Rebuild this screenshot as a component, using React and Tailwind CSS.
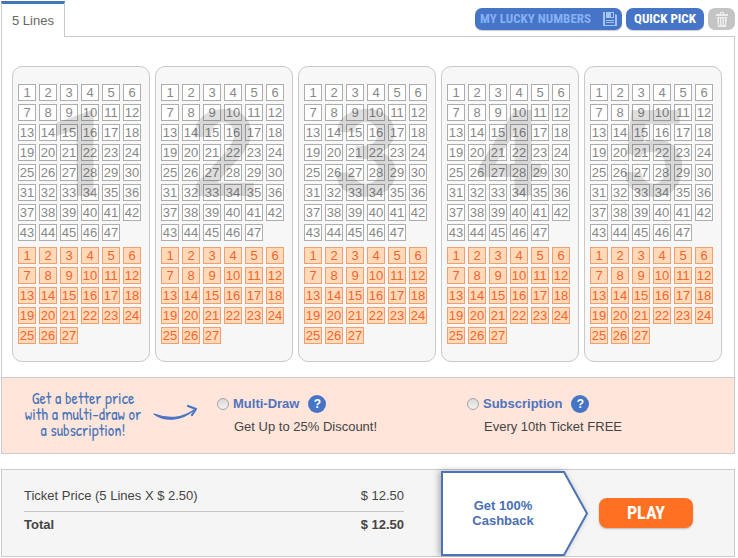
import { useState } from "react";

const LINES = [1, 2, 3, 4, 5];
const MAIN_COUNT = 47;
const BONUS_COUNT = 27;

const range = (n) => Array.from({ length: n }, (_, i) => i + 1);

export default function App() {
  const [picks, setPicks] = useState({});
  const [plan, setPlan] = useState("");

  function toggle(key) {
    setPicks((p) => ({ ...p, [key]: !p[key] }));
  }

  return (
    <main className="pl-px pr-[3px] pt-px bg-white font-['Liberation_Sans',Arial,sans-serif] text-[13px] text-[#444]">
      <header className="flex h-9">
        <button type="button" className="w-16 shrink-0 border-x border-[#c9cbcd] border-t-3 border-t-[#4674b9] text-[#666]">
          5 Lines
        </button>
        <div className="flex-1 flex justify-end gap-1 border-b border-[#c9cbcd] pt-[7px]">
          <PillButton className="w-[147px] justify-between pl-[5px] pr-[5px] text-[#86b0f5]" onClick={() => {}}>
            MY LUCKY NUMBERS
            <SaveIcon />
          </PillButton>
          <PillButton className="w-[78px] justify-center text-white" onClick={() => setPicks({})}>
            QUICK PICK
          </PillButton>
          <button type="button" aria-label="Clear" onClick={() => setPicks({})} className="flex w-[27px] h-[22px] items-center justify-center rounded-[7px] bg-[#c4c4c4]">
            <TrashIcon />
          </button>
        </div>
      </header>

      <section className="border-x border-b border-[#c9cbcd]">
        <div className="flex gap-[5px] pt-[29px] pl-[10px] pr-3 pb-[15px]">
          {LINES.map((line) => <LineCard key={line} line={line} picks={picks} onToggle={toggle} />)}
        </div>

        <div className="flex h-[76px] border-t border-[#c9cbcd] bg-[#ffe5da]">
          <p className="w-[162px] pt-3 text-center text-[16px] leading-4 font-['Patrick_Hand','Comic_Neue',Lato,sans-serif] text-[#4674b9]">
            Get a better price<br />with a multi-draw or<br />a subscription!
          </p>
          <ArrowDoodle />
          <PlanOption id="multi" title="Multi-Draw" note="Get Up to 25% Discount!" plan={plan} setPlan={setPlan} />
          <PlanOption id="subscription" title="Subscription" note="Every 10th Ticket FREE" plan={plan} setPlan={setPlan} />
        </div>
      </section>

      <section className="mt-[15px] flex h-[88px] border border-[#c9cbcd] bg-[#f5f5f5] pl-[22px] pr-[41px]">
        <div className="flex-1 pt-[14px]">
          <table className="w-full border-collapse">
            <tbody>
              <tr className="border-b border-[#c6c6c6]">
                <td className="h-[27px] align-middle pb-1">Ticket Price (5 Lines X $ 2.50)</td>
                <td className="text-right pb-1">$ 12.50</td>
              </tr>
              <tr className="font-bold">
                <td className="h-[26px] align-middle">Total</td>
                <td className="text-right">$ 12.50</td>
              </tr>
            </tbody>
          </table>
        </div>
        <Cashback />
        <button type="button" className="ml-[11px] mt-7 h-[30px] w-[94px] rounded-lg bg-[#ff7022] shadow-[0_1px_2px_rgba(0,0,0,0.25)] font-['Roboto_Condensed','Archivo_Narrow','Barlow_Condensed','Oswald',Roboto,sans-serif] text-lg leading-none font-bold text-white">
          PLAY
        </button>
      </section>
    </main>
  );
}

function PillButton({ className, children, onClick }) {
  return (
    <button
      type="button"
      onClick={onClick}
      className={`flex h-[22px] items-center whitespace-nowrap rounded-[7px] bg-[#4674c6] shadow-[0_1px_1px_rgba(0,0,0,0.2)] font-['Roboto_Condensed','Archivo_Narrow','Barlow_Condensed','Oswald',Roboto,sans-serif] text-[13px] font-bold ${className}`}
    >
      {children}
    </button>
  );
}

function LineCard({ line, picks, onToggle }) {
  return (
    <div className="relative flex-1 rounded-[10px] border border-[#c9c9c9] bg-[#f7f7f7] px-[5px] py-[17px]">
      <div className="grid grid-cols-[repeat(6,18px)] gap-[3px]">
        {range(MAIN_COUNT).map((n) => {
          const key = `${line}-m-${n}`;
          return (
            <button key={n} type="button" aria-pressed={!!picks[key]} onClick={() => onToggle(key)}
              className="h-[17px] border border-[#adadad] bg-white text-center leading-[15px] text-[#888] aria-pressed:bg-[#dbe6f8]">
              {n}
            </button>
          );
        })}
      </div>
      <div className="mt-[6px] grid grid-cols-[repeat(6,18px)] gap-[3px]">
        {range(BONUS_COUNT).map((n) => {
          const key = `${line}-b-${n}`;
          return (
            <button key={n} type="button" aria-pressed={!!picks[key]} onClick={() => onToggle(key)}
              className="h-[17px] border border-[#f0a070] bg-[#ffd9b8] text-center leading-[15px] text-[#f0662f] aria-pressed:bg-[#ffb98a]">
              {n}
            </button>
          );
        })}
      </div>
      <span className="pointer-events-none absolute inset-x-0 top-7 text-center font-[Roboto,sans-serif] text-[120px] leading-[120px] font-bold text-black/13">
        {line}
      </span>
    </div>
  );
}

function PlanOption({ id, title, note, plan, setPlan }) {
  return (
    <div className="w-[250px] pt-4">
      <div className="flex h-5 items-center">
        <input type="radio" id={id} name="plan" checked={plan === id} onChange={() => setPlan(id)}
          className="size-3 appearance-none rounded-full border border-[#a3a3a3] bg-linear-to-b from-[#d8d8d8] to-[#f4f4f4] checked:border-4 checked:border-[#4674c6]" />
        <label htmlFor={id} className="ml-1 font-bold text-[#4f74bd]">{title}</label>
        <button type="button" aria-label={`About ${title}`} className="ml-[9px] size-[18px] rounded-full bg-[#4674c6] text-xs leading-[18px] font-bold text-white">?</button>
      </div>
      <p className="mt-[3px] pl-[17px]">{note}</p>
    </div>
  );
}

function Cashback() {
  return (
    <div className="relative ml-9 mt-px h-[85px] w-[148px]">
      <svg viewBox="0 0 148 85" className="absolute inset-0 size-full overflow-visible drop-shadow-[-2px_0_3px_rgba(0,0,0,0.3)]">
        <path d="M2 1H124L147 42.5L124 84H2Z" fill="#fff" stroke="#4b73b5" strokeWidth="2" />
      </svg>
      <p className="relative pr-[22px] pt-[27px] text-center leading-[15px] font-bold text-[#4a6fb3]">
        Get 100%<br />Cashback
      </p>
    </div>
  );
}

function ArrowDoodle() {
  return (
    <svg viewBox="0 0 45 20" className="ml-[-11px] mr-[19px] mt-[25px] h-5 w-[45px] shrink-0" fill="none" stroke="#4674c6" strokeLinecap="round" strokeLinejoin="round">
      <path d="M1 11C12 19 28 18 41 7C29 16 14 16 1 11Z" fill="#4674c6" strokeWidth="1.2" />
      <path d="M35 3L43 6L39 12" strokeWidth="2.200" />
    </svg>
  );
}

function SaveIcon() {
  return (
    <svg viewBox="0 0 14 14" className="size-[14px] shrink-0" fill="#a5c4f5">
      <path d="M0 0H2V14H0ZM12 2L14 3V14H12ZM3 0H11V6H3ZM8 1V5H10V1Z" fillRule="evenodd" />
      <path d="M3 8H11V9H3ZM3 10H11V11H3ZM2 13H12V14H2Z" />
    </svg>
  );
}

function TrashIcon() {
  return (
    <svg viewBox="0 0 12 15" className="h-[15px] w-3" fill="#ededed">
      <path d="M4 0H8V2H12V4H0V2H4ZM5 1V2H7V1Z" fillRule="evenodd" />
      <path d="M1 5H11L10 15H2ZM3 6V13H4V6ZM5.500 6V13H6.500V6ZM8 6V13H9V6Z" fillRule="evenodd" />
    </svg>
  );
}
